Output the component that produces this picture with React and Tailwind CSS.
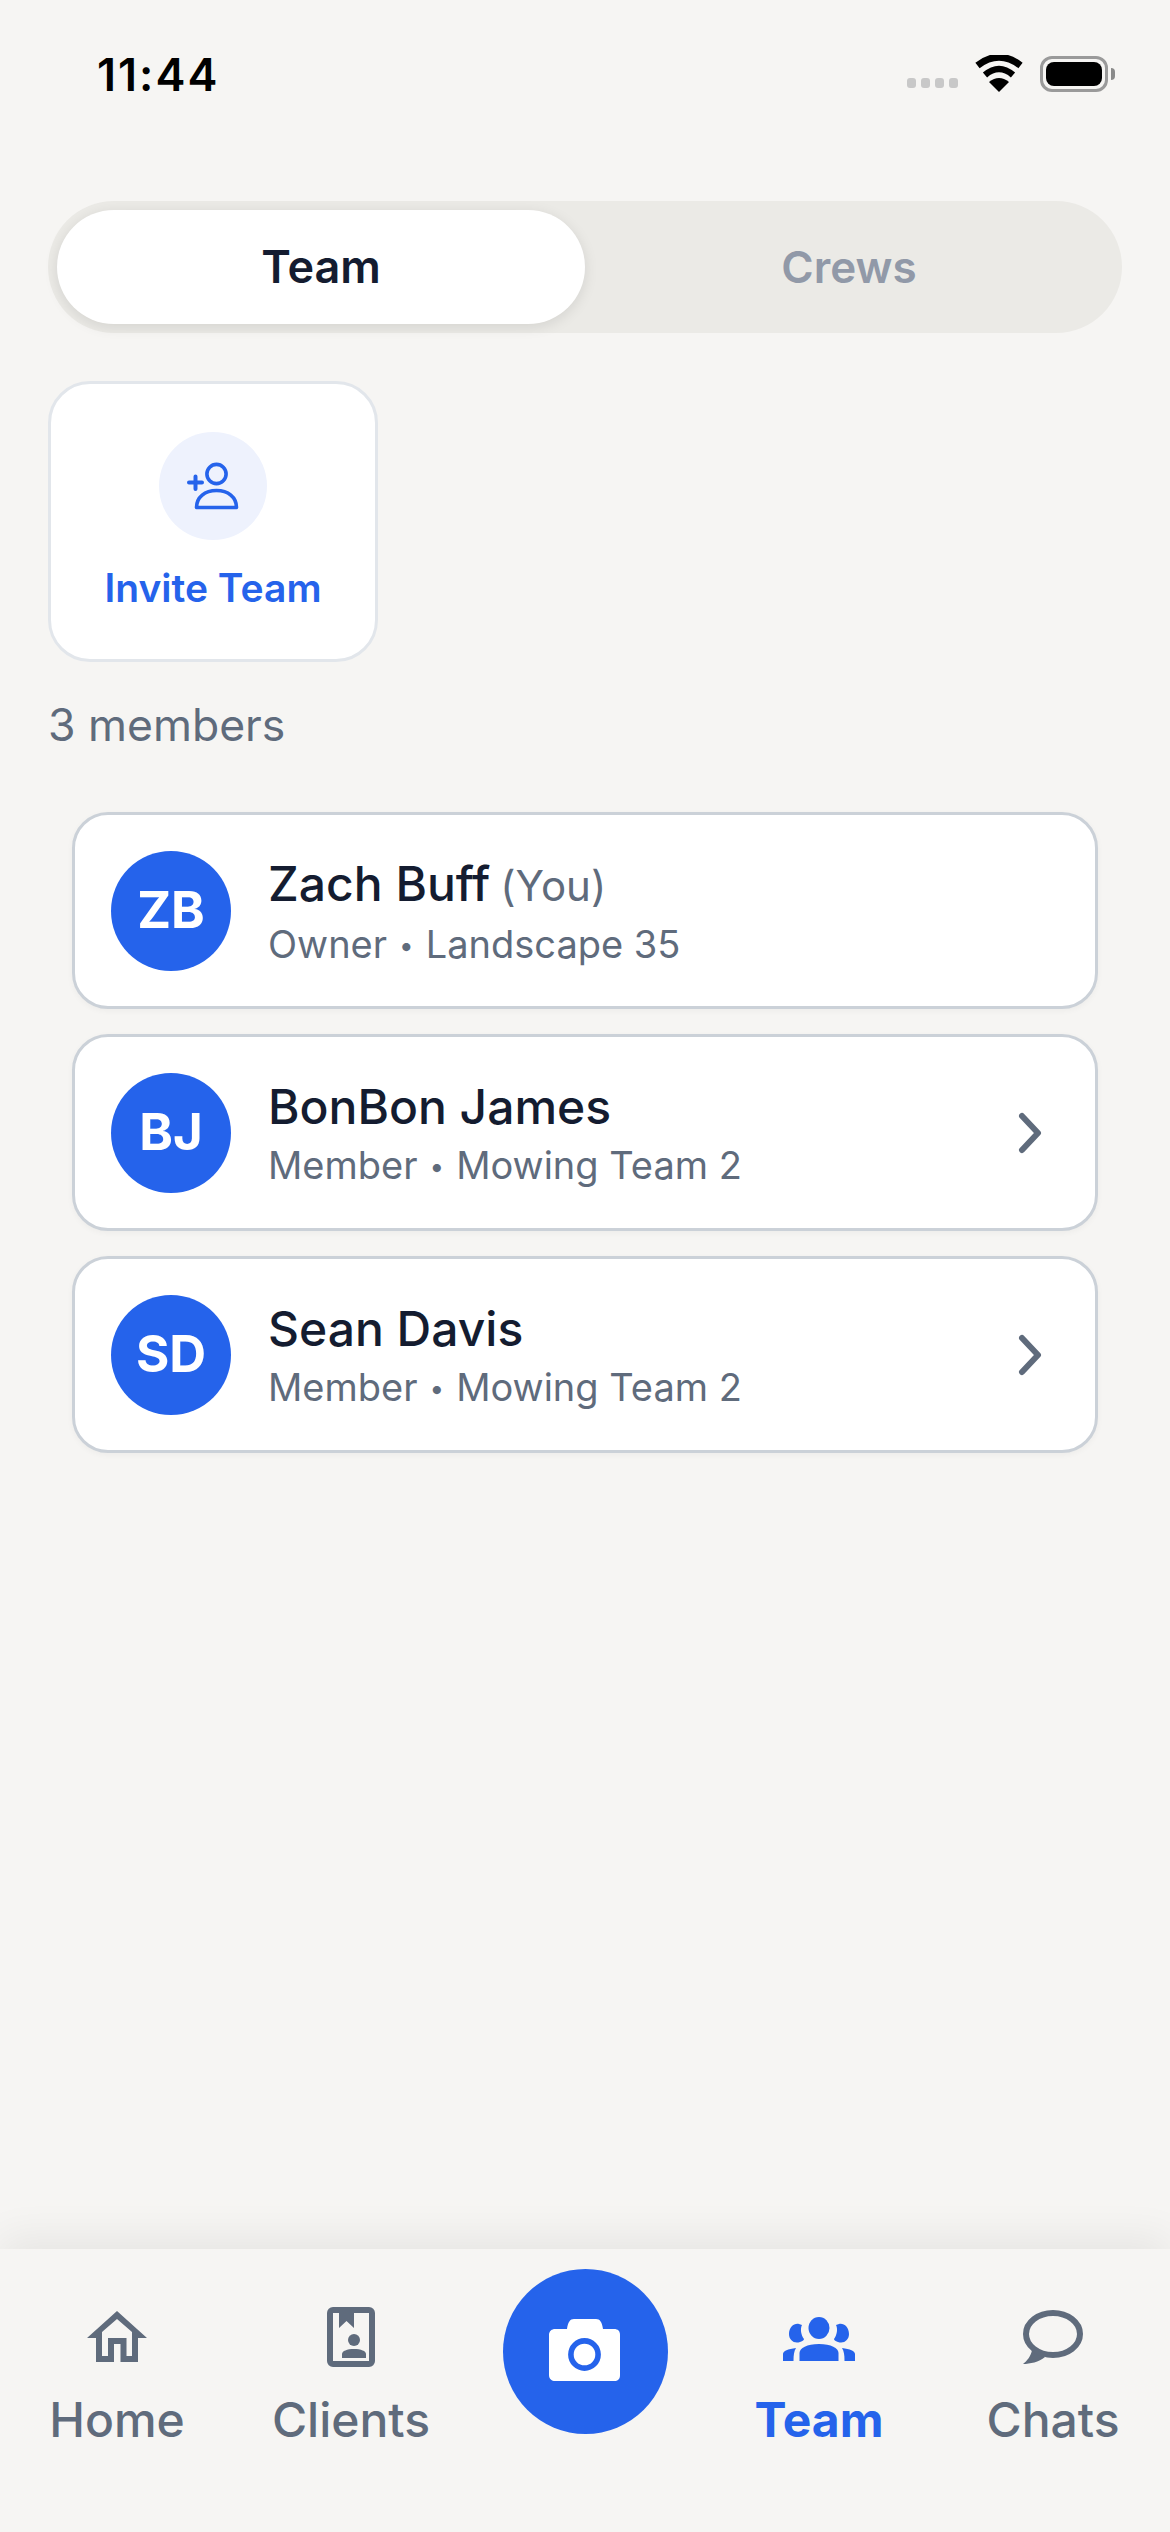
const members = [
  { initials: "ZB", name: "Zach Buff", you: true, role: "Owner", team: "Landscape 35" },
  { initials: "BJ", name: "BonBon James", role: "Member", team: "Mowing Team 2" },
  { initials: "SD", name: "Sean Davis", role: "Member", team: "Mowing Team 2" },
];

function Wifi() {
  return (
    <svg width="48" height="37" viewBox="0 0 48 37" fill="none">
      <path d="M24 37 L14 27 Q24 19 34 27 Z" fill="#000" />
      <path d="M10 20 Q24 8 38 20" stroke="#000" strokeWidth="6.5" />
      <path d="M2.5 10.5 Q24 -6 45.5 10.5" stroke="#000" strokeWidth="7" />
    </svg>
  );
}

function StatusBar() {
  return (
    <div className="flex h-[201px] shrink-0 items-start justify-between pl-[97px] pr-[55px] pt-[50px]">
      <span className="text-[45px] leading-[50px] font-semibold tracking-[2px] text-black">11:44</span>
      <div className="mt-[5px] flex items-end">
        <div className="mb-[4px] flex gap-[5px]">
          <span className="h-[10px] w-[9px] rounded-[3px] bg-[#c8c8c8]" />
          <span className="h-[10px] w-[9px] rounded-[3px] bg-[#c8c8c8]" />
          <span className="h-[10px] w-[9px] rounded-[3px] bg-[#c8c8c8]" />
          <span className="h-[10px] w-[9px] rounded-[3px] bg-[#c8c8c8]" />
        </div>
        <div className="ml-[17px] mr-[17px]">
          <Wifi />
        </div>
        <div className="flex items-center">
          <div className="flex h-[36px] w-[68px] items-center justify-center rounded-[12px] border-[3px] border-[#9a9a9a]">
            <div className="h-[24px] w-[56px] rounded-[8px] bg-black" />
          </div>
          <div className="ml-[3px] h-[12px] w-[4px] rounded-r-full bg-[#8a8a8a]" />
        </div>
      </div>
    </div>
  );
}

function Segment() {
  return (
    <div className="mx-[48px] flex h-[132px] items-center rounded-full bg-[#ebeae6] p-[9px]">
      <div className="flex h-[114px] w-[528px] items-center justify-center rounded-full bg-white shadow-[0_3px_14px_rgba(0,0,0,0.1)]">
        <span className="text-[45px] font-semibold text-[#141c30]">Team</span>
      </div>
      <div className="flex flex-1 items-center justify-center">
        <span className="text-[44px] font-semibold text-[#9199a8]">Crews</span>
      </div>
    </div>
  );
}

function InviteCard() {
  return (
    <div className="ml-[48px] mt-[48px] flex h-[281px] w-[330px] flex-col items-center rounded-[42px] border-[3px] border-[#e2e6eb] bg-white pt-[48px]">
      <div className="flex h-[108px] w-[108px] items-center justify-center rounded-full bg-[#eef2fd]">
        <svg width="108" height="108" viewBox="0 0 108 108" fill="none" stroke="#2563eb" strokeWidth="3.6" strokeLinecap="round">
          <circle cx="57.5" cy="42" r="9.6" />
          <path d="M37.5 75.5 C37.5 65 46 58.5 57.5 58.5 C69 58.5 77.5 65 77.5 75.5 H37.5 Z" strokeLinejoin="round" />
          <path d="M30 50.5 H43 M36.500 44.5 V57" strokeWidth="4" />
        </svg>
      </div>
      <span className="mt-[21px] text-[39px] leading-[54px] font-semibold text-[#2563eb]">Invite Team</span>
    </div>
  );
}

function MemberRow({ member }) {
  return (
    <div className="flex h-[197px] items-center rounded-[36px] border-[3px] border-[#cbd1d8] bg-white pl-[36px] pr-[53px] shadow-[0_2px_6px_rgba(0,0,0,0.04)]">
      <div className="flex h-[120px] w-[120px] shrink-0 items-center justify-center rounded-full bg-[#2563eb]">
        <span className="text-[51px] font-bold text-white">{member.initials}</span>
      </div>
      <div className="ml-[37px] flex-1 pt-[6px]">
        <div className="text-[48px] leading-[60px] font-medium text-[#141c30]">
          {member.name}
          {member.you && <span className="ml-[10px] text-[42px] font-normal text-[#5f6b7c]">(You)</span>}
        </div>
        <div className="mt-[1px] text-[38px] leading-[54px] text-[#5f6b7c]">
          {member.role}
          <span className="mx-[12px] align-[3px] text-[26px]">•</span>
          {member.team}
        </div>
      </div>
      {!member.you && (
        <svg width="24" height="42" viewBox="0 0 24 42" fill="none" stroke="#5f6b7c" strokeWidth="6" strokeLinecap="round" strokeLinejoin="round">
          <path d="M4 4 L20 21 L4 38" />
        </svg>
      )}
    </div>
  );
}

function NavItem({ label, active, children }) {
  return (
    <div className="flex flex-col items-center">
      <div className="flex h-[60px] items-center justify-center">{children}</div>
      <span className={`mt-[23px] text-[48px] leading-[60px] ${active ? "font-bold text-[#2563eb]" : "font-medium text-[#5f6b7c]"}`}>
        {label}
      </span>
    </div>
  );
}

function BottomNav() {
  return (
    <div className="mt-auto grid h-[283px] shrink-0 grid-cols-5 bg-[#f6f5f3] pt-[58px] shadow-[0_-10px_40px_rgba(0,0,0,0.07)]">
      <NavItem label="Home">
        <svg width="60" height="53" viewBox="0 0 60 53">
          <path
            fillRule="evenodd"
            fill="#5f6b7c"
            d="M30 0 L60 27 H51 V51 H33.5 V33 H27 V51 H9 V27 H0 Z M15 45 H21 V27 H39.5 V45 H45 V21 L30 8 L15 21 Z"
          />
        </svg>
      </NavItem>
      <NavItem label="Clients">
        <svg width="48" height="60" viewBox="0 0 48 60">
          <rect x="3" y="3" width="42" height="54" rx="3" fill="none" stroke="#5f6b7c" strokeWidth="6" />
          <path d="M12 5 H27 V21 L19.5 14 L12 21 Z" fill="#5f6b7c" />
          <circle cx="27" cy="33" r="6" fill="#5f6b7c" />
          <path d="M15 51 V47 C15 44 20 42 27 42 C34 42 39 44 39 47 V51 Z" fill="#5f6b7c" />
        </svg>
      </NavItem>
      <div className="flex justify-center">
        <div className="-mt-[38px] flex h-[165px] w-[165px] items-center justify-center rounded-full bg-[#2563eb]">
          <svg className="mb-[4px]" width="72" height="62" viewBox="0 0 72 62">
            <path
              d="M6 10 H18 C19 3 21 0 25 0 H47 C51 0 53 3 54 10 H65 C69 10 71 12 71 16 V56 C71 60 69 62 65 62 H6 C3 62 0 60 0 56 V16 C0 12 3 10 6 10 Z"
              fill="#fff"
            />
            <circle cx="35.5" cy="35.5" r="13.6" fill="#fff" stroke="#2563eb" strokeWidth="5.6" />
          </svg>
        </div>
      </div>
      <NavItem label="Team" active>
        <svg width="72" height="48" viewBox="0 -4 72 48" fill="#2563eb">
          <ellipse cx="36" cy="11" rx="10.5" ry="11" />
          <path d="M16 7 C11 6 6 10 6 17 C6 23 11 27 17 25 C20 24 21 23 21 22 C18 18 17 12 19 8 C18 8 17 7 16 7 Z" />
          <path d="M56 7 C61 6 66 10 66 17 C66 23 61 27 55 25 C52 24 51 23 51 22 C54 18 55 12 53 8 C54 8 55 7 56 7 Z" />
          <path d="M16.500 44 V36 C16.500 31 24 27 36 27 C48 27 55.500 31 55.500 36 V44 Z" />
          <path d="M0 44 V37 C0 34 5 32 13 31 C11 34 10.500 38 10.500 44 Z" />
          <path d="M72 44 V37 C72 34 67 32 59 31 C61 34 61.500 38 61.500 44 Z" />
        </svg>
      </NavItem>
      <NavItem label="Chats">
        <svg width="60" height="54" viewBox="0 0 60 54">
          <path d="M9 40 C8 46 4 51 0 54 C7 54 16 52 22 47 L14 38 Z" fill="#5f6b7c" />
          <ellipse cx="30" cy="24" rx="27" ry="21" fill="none" stroke="#5f6b7c" strokeWidth="6" />
        </svg>
      </NavItem>
    </div>
  );
}

export default function App() {
  return (
    <div className="flex h-[2532px] w-[1170px] flex-col overflow-hidden bg-[#f6f5f3] font-['Inter',sans-serif]">
      <StatusBar />
      <Segment />
      <InviteCard />
      <div className="ml-[48px] mt-[36px] text-[44.500px] leading-[54px] text-[#5f6b7c]">3 members</div>
      <div className="mx-[72px] mt-[60px] flex flex-col gap-[25px]">
        {members.map((member) => (
          <MemberRow key={member.initials} member={member} />
        ))}
      </div>
      <BottomNav />
    </div>
  );
}
